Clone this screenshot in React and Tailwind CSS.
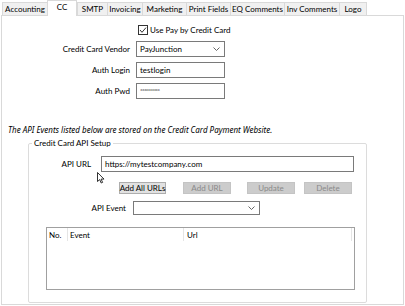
import React from "react";

const tabs = ["Accounting", "CC", "SMTP", "Invoicing", "Marketing", "Print Fields", "EQ Comments", "Inv Comments", "Logo"];
const tabW = [45, 30, 30, 35, 44, 44, 54, 55, 28];

function Chevron() {
  return (
    <svg width="7" height="4" viewBox="0 0 7 4" className="block">
      <path d="M0.5 0.5 L3.5 3.5 L6.5 0.5" fill="none" stroke="#555" strokeWidth="0.9" />
    </svg>
  );
}

function Btn({ children, disabled, w }) {
  return (
    <div
      className={
        "h-[12px] flex items-center justify-center border leading-none whitespace-nowrap " +
        (disabled ? "border-[#c4c4c4] bg-[#cccccc] text-[#8a8a8a]" : "border-[#adadad] bg-[#e1e1e1] text-black")
      }
      style={{ width: w }}
    >
      {children}
    </div>
  );
}

export default function App() {
  return (
    <div
      className="w-[405px] h-[306px] bg-white text-[8px] text-black overflow-hidden relative whitespace-nowrap"
      style={{ fontFamily: 'Lato, "Noto Sans", sans-serif' }}
    >
      {/* tab strip */}
      <div className="flex items-end h-[15px] pl-[2px]">
        {tabs.map((t, i) => (
          <div
            key={t}
            className={
              "flex items-center justify-center leading-none border-[#d9d9d9] border-t border-l " +
              (i === tabs.length - 1 ? "border-r " : "") +
              (t === "CC" ? "h-[16px] bg-white relative z-10 -mb-px border-r" : "h-[13px] bg-[#f0f0f0]")
            }
            style={{ width: tabW[i] }}
          >
            <span className={t === "CC" ? "-mt-[3px]" : ""}>{t}</span>
          </div>
        ))}
      </div>

      {/* panel */}
      <div className="mx-[1px] h-[290px] border border-[#d9d9d9] bg-white flex flex-col">
        <div className="mt-[9px] ml-[136px] flex items-center h-[10px] gap-[2px]">
          <svg width="10" height="10" viewBox="0 0 10 10" className="block">
            <rect x="0.5" y="0.5" width="9" height="9" fill="#fff" stroke="#333" strokeWidth="1" />
            <path d="M2 5 L4 7.3 L8 2.6" fill="none" stroke="#333" strokeWidth="1" />
          </svg>
          <span className="leading-none">Use Pay by Credit Card</span>
        </div>

        <div className="mt-[6px] flex items-center h-[16px]">
          <div className="w-[128px] text-right leading-none">Credit Card Vendor</div>
          <div className="ml-[6px] w-[89px] h-[16px] border border-[#7a7a7a] flex items-center justify-between pl-[3px] pr-[4px] leading-none">
            <span>PayJunction</span>
            <Chevron />
          </div>
        </div>

        <div className="mt-[5px] flex items-center h-[16px]">
          <div className="w-[128px] text-right leading-none">Auth Login</div>
          <div className="ml-[6px] w-[89px] h-[16px] border border-[#7a7a7a] flex items-center pl-[3px] leading-none">
            testlogin
          </div>
        </div>

        <div className="mt-[5px] flex items-center h-[16px]">
          <div className="w-[128px] text-right leading-none">Auth Pwd</div>
          <div className="ml-[6px] w-[89px] h-[16px] border border-[#7a7a7a] flex items-center pl-[3px] leading-none text-[6px] tracking-[-0.6px]">
            **********
          </div>
        </div>

        <div
          className="mt-[26px] ml-[6px] h-[10px] leading-[10px] italic"
          style={{ fontFamily: '"Noto Sans", sans-serif' }}
        >
          The API Events listed below are stored on the Credit Card Payment Website.
        </div>

        <fieldset className="mt-[3px] ml-[26px] w-[339px] border border-[#dcdcdc] rounded-[2px] px-0 pb-[12px] m-0 min-w-0">
          <legend className="ml-[3px] px-[2px] leading-[10px] h-[10px]">Credit Card API Setup</legend>

          <div className="mt-[8px] flex items-center h-[16px]">
            <div className="w-[62px] text-right leading-none">API URL</div>
            <div className="ml-[10px] w-[253px] h-[16px] border border-[#7a7a7a] flex items-center pl-[3px] leading-none">
              https://mytestcompany.com
            </div>
          </div>

          <div className="mt-[10px] ml-[90px] flex items-center">
            <Btn w={47}>Add All URLs</Btn>
            <div className="ml-[17px]"><Btn disabled w={48}>Add URL</Btn></div>
            <div className="ml-[16px]"><Btn disabled w={48}>Update</Btn></div>
            <div className="ml-[9px]"><Btn disabled w={48}>Delete</Btn></div>
          </div>

          <div className="mt-[7px] flex items-center h-[14px]">
            <div className="w-[97px] text-right leading-none">API Event</div>
            <div className="ml-[7px] w-[127px] h-[14px] border border-[#7a7a7a] flex items-center justify-end pr-[4px]">
              <Chevron />
            </div>
          </div>

          <div className="mt-[12px] ml-[17px] w-[309px] h-[63px] border border-[#a0a0a0] bg-white">
            <div className="flex h-[13px] items-center leading-none">
              <div className="w-[21px] pl-[2px] border-r border-[#e5e5e5] h-full flex items-center">No.</div>
              <div className="w-[116px] pl-[2px] border-r border-[#e5e5e5] h-full flex items-center">Event</div>
              <div className="w-[168px] pl-[3px] border-r border-[#e5e5e5] h-full flex items-center">Url</div>
            </div>
          </div>
        </fieldset>
      </div>

      {/* mouse cursor */}
      <svg width="8" height="12" viewBox="0 0 8 12" className="absolute left-[97px] top-[172px]">
        <path d="M0.5 0.5 L0.5 9.5 L2.7 7.6 L4.2 11 L5.6 10.4 L4.1 7.1 L7 7.1 Z" fill="#fff" stroke="#000" strokeWidth="0.8" strokeLinejoin="round" />
      </svg>
    </div>
  );
}
